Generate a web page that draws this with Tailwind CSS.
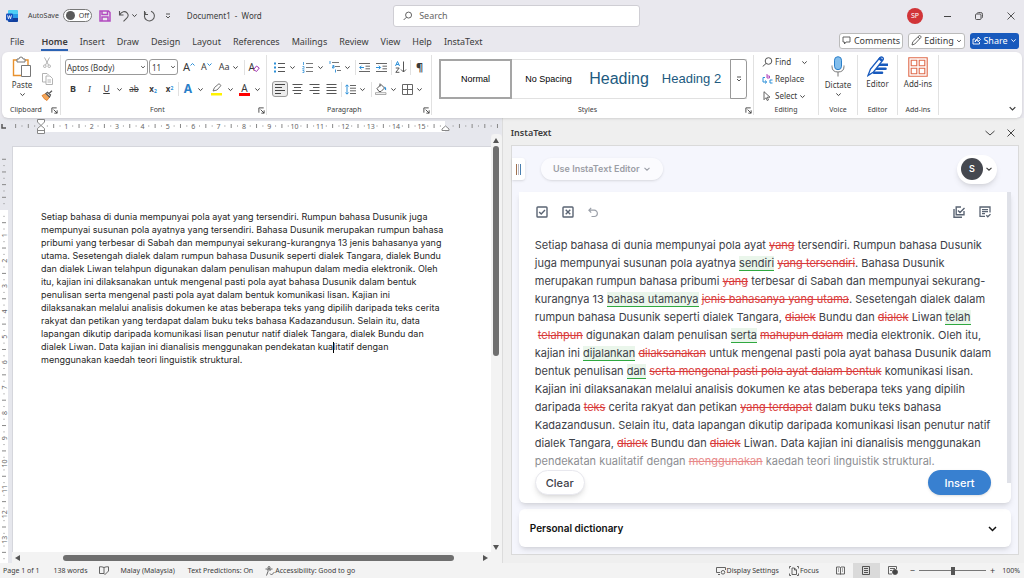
<!DOCTYPE html>
<html lang="en">
<head>
    <meta charset="UTF-8">
    <meta name="viewport" content="width=device-width, initial-scale=1.0">
    <title>Document1 - Word</title>
    <script src="https://cdn.jsdelivr.net/npm/@tailwindcss/browser@4"></script>
</head>
<body class="h-screen overflow-hidden flex flex-col bg-[#e9e8ee] text-[#3b3b3b] font-['Noto_Sans',sans-serif] text-[8px] leading-[10px]">

    <!-- Shared icon shapes -->
    <svg class="hidden">
        <symbol id="chev" viewBox="0 0 8 8"><path d="M1.5 2.8 4 5.2 6.5 2.8" fill="none" stroke="currentColor" stroke-width="1.1"/></symbol>
        <symbol id="launcher" viewBox="0 0 8 8"><path d="M1 6.5V1h5.5M3 3l4 4M7 3.8V7H3.8" fill="none" stroke="currentColor" stroke-width="1"/></symbol>
    </svg>

    <!-- Title bar -->
    <header class="h-[31px] shrink-0 flex items-center pl-[6px] pr-[8px]">
        <svg class="w-[12px] h-[12px]" viewBox="0 0 12 12"><rect x="2" width="10" height="12" rx="1.5" fill="#2b9be8"/><path d="M2 1.5Q2 0 3.5 0h7Q12 0 12 1.5V4H2z" fill="#4fd0f5"/><path d="M2 8h10v2.500q0 1.500-1.500 1.500h-7Q2 12 2 10.500z" fill="#123f9d"/><rect y="3.500" width="7" height="7" rx="1.200" fill="#1650bd"/><path d="m1.500 5.300 1 3.500 1-3.200 1 3.200 1-3.500" fill="none" stroke="#fff" stroke-width=".8"/></svg>
        <label class="flex items-center ml-[10px] gap-[4px] text-[7px]">AutoSave
            <input type="checkbox" class="peer sr-only">
            <span class="w-[29px] h-[13px] border border-[#777] rounded-full bg-white flex items-center gap-[4px] pl-[2px] text-[7px]"><i class="w-[9px] h-[9px] rounded-full bg-[#5a5a5a]"></i>Off</span>
        </label>
        <button class="ml-[7px]" aria-label="Save"><svg class="w-[12px] h-[12px]" viewBox="0 0 12 12" fill="none" stroke="#b24bc0" stroke-width="1.500"><path d="M1 1h8.500L11 2.500V11H1zM3 1v3.500h5.500V1M3 11V7h6v4"/></svg></button>
        <button class="ml-[7px]" aria-label="Undo"><svg class="w-[12px] h-[12px]" viewBox="0 0 12 12" fill="none" stroke="#555" stroke-width="1.100"><path d="M1.500 1v4h4M1.700 4.800C3.500 1.500 7 .8 9 2.800s1.200 4-.5 5.500L5.500 11.300"/></svg></button>
        <svg class="w-[7px] h-[7px] ml-px"><use href="#chev"/></svg>
        <button class="ml-[5px]" aria-label="Redo"><svg class="w-[13px] h-[12px]" viewBox="0 0 13 12" fill="none" stroke="#555" stroke-width="1.100"><path d="M1.500 1v3.500H5M8 1.200A5 5 0 1 1 3 2.300"/></svg></button>
        <svg class="w-[6px] h-[6px] ml-[9px]" viewBox="0 0 6 6" fill="none" stroke="#555"><path d="M1 1h4M1 3l2 2 2-2"/></svg>
        <h1 class="ml-[16px] w-[206px]">Document1&nbsp; -&nbsp; Word</h1>
        <label class="w-[247px] h-[22px] bg-white border border-[#cfced4] rounded-[3px] flex items-center pl-[9px] gap-[7px]">
            <svg class="w-[10px] h-[10px]" viewBox="0 0 10 10" fill="none" stroke="#555"><circle cx="6" cy="4" r="3.200"/><path d="M3.700 6.300.7 9.300"/></svg>
            <input type="text" aria-label="Search" placeholder="Search" class="w-full text-[9px] outline-none placeholder:text-[#666]">
        </label>
        <div class="ml-auto flex items-center">
            <span class="w-[16px] h-[16px] rounded-full bg-[#d13438] text-white text-[7px] flex items-center justify-center mr-[20px]">SP</span>
            <button class="mr-[24px]" aria-label="Minimize"><svg class="w-[8px] h-[8px]" viewBox="0 0 8 8" stroke="#444"><path d="M1 4.500h7"/></svg></button>
            <button class="mr-[24px]" aria-label="Restore"><svg class="w-[8px] h-[8px]" viewBox="0 0 8 8" fill="none" stroke="#444" stroke-width=".9"><rect x=".5" y="2" width="5.500" height="5.500" rx="1"/><path d="M2 1.500Q2.300.5 3.500.5h2.200Q7.500.5 7.500 2.300v2.500q0 1-.8 1.300"/></svg></button>
            <button class="mr-px" aria-label="Close"><svg class="w-[8px] h-[8px]" viewBox="0 0 8 8" stroke="#444" stroke-width=".9"><path d="m.5.5 7 7M7.500.5l-7 7"/></svg></button>
        </div>
    </header>

    <!-- Ribbon tabs -->
    <nav class="h-[21px] shrink-0 flex items-center pl-[10px] pr-[5px] text-[9px] leading-[12px]">
        <div class="flex gap-[12px] h-[18px] items-center">
            <a href="#" class="mr-[5px]">File</a>
            <a href="#" class="font-semibold h-[18px] pt-[3px] border-b-2 border-[#2b63b5]">Home</a>
            <a href="#">Insert</a>
            <a href="#">Draw</a>
            <a href="#">Design</a>
            <a href="#">Layout</a>
            <a href="#">References</a>
            <a href="#">Mailings</a>
            <a href="#">Review</a>
            <a href="#">View</a>
            <a href="#">Help</a>
            <a href="#">InstaText</a>
        </div>
        <div class="ml-auto flex gap-[5px] mb-[2px]">
            <button class="h-[16px] w-[64px] flex items-center justify-center gap-[3px] bg-white border border-[#bbb] rounded-[3px]"><svg class="w-[9px] h-[9px]" viewBox="0 0 9 9" fill="none" stroke="#555" stroke-width=".9"><path d="M1 1h7v5H4L2.500 8V6H1z"/></svg>Comments</button>
            <button class="h-[16px] w-[57px] flex items-center justify-center gap-[2px] bg-white border border-[#bbb] rounded-[3px]"><svg class="w-[11px] h-[11px]" viewBox="0 0 11 11" fill="none" stroke="#555" stroke-width=".9"><path d="m1 10 .8-3.200L8 .8q.8-.6 1.600.2t.2 1.600L3.800 9zM7 2l2 2"/></svg>Editing<svg class="w-[6px] h-[6px]"><use href="#chev"/></svg></button>
            <button class="h-[16px] w-[49px] flex items-center justify-center gap-[2px] bg-[#185abd] text-white rounded-[3px]"><svg class="w-[9px] h-[9px]" viewBox="0 0 9 9" fill="none" stroke="#fff" stroke-width=".9"><path d="M3 3H1v5h6.500V6M3 6Q3.200 3 6 3V1l2.500 2.500L6 5.800V4.200Q4 4 3 6z"/></svg>Share<svg class="w-[7px] h-[7px]"><use href="#chev"/></svg></button>
        </div>
    </nav>

    <!-- Ribbon -->
    <section class="h-[66px] shrink-0 mx-[2px] bg-white rounded-[6px] shadow-sm flex py-[3px] relative z-10">
        <!-- Clipboard -->
        <div class="w-[59px] flex flex-col border-r border-[#e1e1e1]">
            <div class="flex-1 flex justify-center gap-[6px]">
                <button class="flex flex-col items-center w-[26px]">
                    <svg class="w-[20px] h-[22px] mt-px" viewBox="0 0 20 22" fill="none"><path d="M5 4H1.500v15.500H9M13 4h3v5" stroke="#e8912d" stroke-width="1.400"/><path d="M5 3h2q0-2 2-2t2 2h2v3H5z" fill="#fff" stroke="#777"/><path d="M9.500 9.500h9v11h-9z" fill="#fff" stroke="#777"/></svg>
                    <span class="mt-[2px]">Paste</span>
                    <svg class="w-[7px] h-[7px] mt-px"><use href="#chev"/></svg>
                </button>
                <div class="flex flex-col items-center gap-[5px] pt-[2px]">
                    <button aria-label="Cut"><svg class="w-[8px] h-[11px] block" viewBox="0 0 8 11" fill="none" stroke="#aaa" stroke-width=".9"><path d="m1.500.5 4 7.500M6.500.5l-4 7.500"/><circle cx="1.800" cy="9.200" r="1.300"/><circle cx="6.200" cy="9.200" r="1.300"/></svg></button>
                    <button aria-label="Copy"><svg class="w-[11px] h-[12px] block" viewBox="0 0 11 12" fill="none" stroke="#aaa" stroke-width=".9"><path d="M4 9H.5V.5H5L6.500 2M4 3h4l2.500 2.500v6H4zM5.500 7H9M5.500 9H9"/></svg></button>
                    <button aria-label="Format Painter"><svg class="w-[12px] h-[11px] block" viewBox="0 0 12 11"><path d="M1 5.500 5 3.500 8.500 7 6 10.500q-3-1-5-5z" fill="#f3a65a" stroke="#e0761b" stroke-width=".8"/><path d="m5 3.500 1.500-1.200L9.500 5 8.500 7zM8 3.500 11 .8" stroke="#555" stroke-width="1.200" fill="#fff"/></svg></button>
                </div>
            </div>
            <div class="flex items-center justify-between pl-[8px] pr-[2px] text-[7px] leading-[10px]">Clipboard<svg class="w-[7px] h-[7px]"><use href="#launcher"/></svg></div>
        </div>
        <!-- Font -->
        <div class="w-[206px] flex flex-col border-r border-[#e1e1e1]">
            <div class="flex-1 flex flex-col pl-[4px] pt-[4px] gap-[6px]">
                <div class="flex items-center h-[16px]">
                    <div class="relative w-[83px] h-[16px]"><select aria-label="Font" class="appearance-none w-full h-full border border-[#999] rounded-[3px] pl-[1px] leading-[13px]"><option>Aptos (Body)</option></select><svg class="w-[6px] h-[6px] absolute right-[2px] top-[5px]"><use href="#chev"/></svg></div>
                    <div class="relative w-[29px] h-[16px] ml-[1px]"><select aria-label="Font size" class="appearance-none w-full h-full border border-[#999] rounded-[3px] pl-[2px] leading-[13px]"><option>11</option></select><svg class="w-[6px] h-[6px] absolute right-[2px] top-[5px]"><use href="#chev"/></svg></div>
                    <button class="ml-[5px] text-[11px] flex">A<sup class="top-0"><svg class="w-[5px] h-[5px]" viewBox="0 0 5 5" fill="none" stroke="#2b8fd8"><path d="m.5 3.500 2-2 2 2"/></svg></sup></button>
                    <button class="ml-[6px] text-[9px] flex">A<sup class="top-0"><svg class="w-[5px] h-[5px]" viewBox="0 0 5 5" fill="none" stroke="#2b8fd8"><path d="m.5 1.500 2 2 2-2"/></svg></sup></button>
                    <button class="ml-[7px] text-[9px] flex items-center gap-[2px]">Aa<svg class="w-[7px] h-[7px]"><use href="#chev"/></svg></button>
                    <i class="w-px h-[15px] bg-[#e1e1e1] ml-[5px]"></i>
                    <button class="ml-[4px] text-[10px] flex items-end">A<svg class="w-[7px] h-[7px] -ml-[2px]" viewBox="0 0 7 7"><path d="M.7 4.500 3.500 1l2.800 2-2.800 3.500z" fill="#fff" stroke="#a63bb5"/></svg></button>
                </div>
                <div class="flex items-center h-[16px] text-[9px]">
                    <button class="w-[16px] font-bold">B</button>
                    <button class="w-[17px] italic font-serif">I</button>
                    <button class="w-[17px] underline">U</button>
                    <svg class="w-[7px] h-[7px] ml-px"><use href="#chev"/></svg>
                    <button class="w-[22px] line-through text-[8px]">ab</button>
                    <button class="w-[16px] text-[8px] font-bold">x<sub class="text-[#2b8fd8] text-[5px]">2</sub></button>
                    <button class="w-[17px] text-[8px] font-bold">x<sup class="text-[#2b8fd8] text-[5px]">2</sup></button>
                    <i class="w-px h-[14px] bg-[#e1e1e1]"></i>
                    <button class="w-[18px] text-[12px] font-bold text-[#2b7fc9]">A</button>
                    <svg class="w-[7px] h-[7px]"><use href="#chev"/></svg>
                    <button class="ml-[7px]" aria-label="Highlight"><svg class="w-[11px] h-[13px] block" viewBox="0 0 11 13"><path d="M0 10h11v2.500H0z" fill="#fff200"/><path d="m2 8 1.500-3.500L8 .7l2 1.800-4 4.500L2 8z" fill="#fff" stroke="#666" stroke-width=".9"/></svg></button>
                    <svg class="w-[7px] h-[7px] ml-[5px]"><use href="#chev"/></svg>
                    <button class="ml-[5px]" aria-label="Font colour"><span class="block w-[11px] h-[13px] border-b-[3px] border-[#f00] text-[10px]">A</span></button>
                    <svg class="w-[7px] h-[7px] ml-[4px]"><use href="#chev"/></svg>
                </div>
            </div>
            <div class="flex items-center justify-between pl-[89px] pr-[1px] text-[7px] leading-[10px]">Font<svg class="w-[7px] h-[7px]"><use href="#launcher"/></svg></div>
        </div>
        <!-- Paragraph -->
        <div class="w-[165px] flex flex-col border-r border-[#e1e1e1]">
            <div class="flex-1 flex flex-col pl-[5px] pt-[4px] gap-[6px]">
                <div class="flex items-center h-[16px]">
                    <button class="ml-[2px]" aria-label="Bullets"><svg class="w-[11px] h-[11px] block" viewBox="0 0 11 11"><path d="M4 1.500h7M4 5.500h7M4 9.500h7" stroke="#555"/><path d="M0 1.500h2M0 5.500h2M0 9.500h2" stroke="#2b8fd8" stroke-width="2"/></svg></button>
                    <svg class="w-[7px] h-[7px] ml-[4px]"><use href="#chev"/></svg>
                    <button class="ml-[6px]" aria-label="Numbering"><svg class="w-[11px] h-[11px] block" viewBox="0 0 11 11"><path d="M4 1.500h7M4 5.500h7M4 9.500h7" stroke="#777"/><path d="M1.500 0v3M.5 4.500h1.500v1L.5 7h2M.5 8.500h1.500v2H.5" fill="none" stroke="#2b8fd8" stroke-width=".8"/></svg></button>
                    <svg class="w-[7px] h-[7px] ml-[4px]"><use href="#chev"/></svg>
                    <button class="ml-[5px]" aria-label="Multilevel list"><svg class="w-[12px] h-[12px] block" viewBox="0 0 12 12"><path d="M3 1.500h7M6 5.500h5M8 9.500h4" stroke="#777"/><path d="M1 0v3M3.500 4.500H5v2.500H3.500V5.700H5M6.500 8.500v3" fill="none" stroke="#2b8fd8" stroke-width=".9"/></svg></button>
                    <svg class="w-[7px] h-[7px] ml-[3px]"><use href="#chev"/></svg>
                    <i class="w-px h-[15px] bg-[#e1e1e1] ml-[4px]"></i>
                    <button class="ml-[3px]" aria-label="Decrease indent"><svg class="w-[11px] h-[11px] block" viewBox="0 0 11 11" fill="none"><path d="M0 1.500h11M6.500 4.200H11M6.500 6.800H11M0 9.500h11" stroke="#666"/><path d="M5 5.500H.8M2.500 3.700.7 5.500l1.800 1.800" stroke="#2b8fd8"/></svg></button>
                    <button class="ml-[6px]" aria-label="Increase indent"><svg class="w-[11px] h-[11px] block" viewBox="0 0 11 11" fill="none"><path d="M0 1.500h11M6.500 4.200H11M6.500 6.800H11M0 9.500h11" stroke="#666"/><path d="M0 5.500h4.500M2.800 3.700l1.800 1.800-1.800 1.800" stroke="#2b8fd8"/></svg></button>
                    <i class="w-px h-[15px] bg-[#e1e1e1] ml-[4px]"></i>
                    <button class="ml-[3px]" aria-label="Sort"><svg class="w-[12px] h-[12px] block" viewBox="0 0 12 12" fill="none"><path d="M.5 5 2.500.5 4.500 5M1.200 3.500h2.600" stroke="#2b8fd8"/><path d="M.8 7h3.400L.8 11.300h3.600M8.500.5V11M6 8.500 8.500 11 11 8.500" stroke="#555"/></svg></button>
                    <i class="w-px h-[15px] bg-[#e1e1e1] ml-[3px]"></i>
                    <button class="ml-[5px] text-[11px] font-bold">¶</button>
                </div>
                <div class="flex items-center h-[16px]">
                    <button class="w-[16px] h-[16px] rounded-[3px] border border-[#999] bg-[#ececec] flex items-center justify-center" aria-label="Align left"><svg class="w-[11px] h-[10px]" viewBox="0 0 11 10" stroke="#444"><path d="M0 .5h10M0 3.500h7M0 6.500h10M0 9.500h6"/></svg></button>
                    <button class="ml-[4px]" aria-label="Center"><svg class="w-[11px] h-[10px] block" viewBox="0 0 11 10" stroke="#555"><path d="M.5.500h10M2 3.500h7M.5 6.500h10M2 9.500h7"/></svg></button>
                    <button class="ml-[6px]" aria-label="Align right"><svg class="w-[11px] h-[10px] block" viewBox="0 0 11 10" stroke="#555"><path d="M.5.500h10M4 3.500h6.500M.5 6.500h10M4 9.500h6.500"/></svg></button>
                    <button class="ml-[6px]" aria-label="Justify"><svg class="w-[11px] h-[10px] block" viewBox="0 0 11 10" stroke="#555"><path d="M.5.500h10M.5 3.500h10M.5 6.500h10M.5 9.500h10"/></svg></button>
                    <i class="w-px h-[15px] bg-[#e1e1e1] ml-[4px]"></i>
                    <button class="ml-[3px]" aria-label="Line spacing"><svg class="w-[11px] h-[11px] block" viewBox="0 0 11 11" fill="none"><path d="M5 1.500h6M5 4.200h6M5 6.800h6M5 9.500h6" stroke="#666"/><path d="M2 1v9M.4 2.500 2 .8l1.600 1.700M.4 8.500 2 10.200l1.600-1.700" stroke="#2b8fd8"/></svg></button>
                    <svg class="w-[7px] h-[7px] ml-[3px]"><use href="#chev"/></svg>
                    <i class="w-px h-[15px] bg-[#e1e1e1] ml-[5px]"></i>
                    <button class="ml-[3px]" aria-label="Shading"><svg class="w-[12px] h-[12px] block" viewBox="0 0 12 12" fill="none"><path d="m2 5.500 4-4L9.500 5 6 8.500H4zM5 .500v3" stroke="#555"/><path d="M9.500 4q1.500 1 1 3" stroke="#2b8fd8" stroke-width="1.300"/><path d="M.5 9.700h10.500v1.800H.5z" fill="#fff" stroke="#888" stroke-width=".7"/></svg></button>
                    <svg class="w-[7px] h-[7px] ml-[3px]"><use href="#chev"/></svg>
                    <button class="ml-[5px]" aria-label="Borders"><svg class="w-[11px] h-[11px] block" viewBox="0 0 11 11" fill="none" stroke="#666"><path d="M.5.500h10v10H.5zM5.500.500v10M.5 5.500h10"/></svg></button>
                    <svg class="w-[7px] h-[7px] ml-[3px]"><use href="#chev"/></svg>
                </div>
            </div>
            <div class="flex items-center justify-between pl-[60px] pr-[1px] text-[7px] leading-[10px]">Paragraph<svg class="w-[7px] h-[7px]"><use href="#launcher"/></svg></div>
        </div>
        <!-- Styles -->
        <div class="w-[322px] flex flex-col border-r border-[#e1e1e1]">
            <div class="flex-1 pl-[7px] pt-[4px]">
                <div class="w-[308px] h-[40px] flex items-stretch border-y border-[#e1e1e1] font-['Liberation_Sans',sans-serif] text-[9px]">
                    <button class="w-[73px] -my-px border-2 border-[#a5a5a5] text-black">Normal</button>
                    <button class="w-[73px] text-black">No Spacing</button>
                    <button class="w-[68px] overflow-hidden whitespace-nowrap text-[16px] leading-[20px] text-[#215a80]">Heading</button>
                    <button class="flex-1 text-[13px] leading-[16px] text-[#215a80]">Heading 2</button>
                    <button class="w-[17px] -my-px border border-[#999] rounded-r-[3px] flex items-center justify-center" aria-label="More styles"><svg class="w-[6px] h-[6px]" viewBox="0 0 6 6" fill="none" stroke="#555"><path d="M1 1h4M1 3l2 2 2-2"/></svg></button>
                </div>
            </div>
            <div class="flex items-center justify-between pl-[146px] pr-[1px] text-[7px] leading-[10px]">Styles<svg class="w-[7px] h-[7px]"><use href="#launcher"/></svg></div>
        </div>
        <!-- Editing -->
        <div class="w-[65px] flex flex-col border-r border-[#e1e1e1]">
            <div class="flex-1 flex flex-col items-start gap-[7px] pl-[8px] pt-[2px]">
                <button class="flex items-center gap-[2px]"><svg class="w-[11px] h-[10px]" viewBox="0 0 11 10" fill="none" stroke="#555"><circle cx="6.500" cy="4" r="3.300"/><path d="M4 6.500.7 9.500"/></svg>Find<svg class="w-[7px] h-[7px] ml-[8px]"><use href="#chev"/></svg></button>
                <button class="flex items-center gap-[2px]"><svg class="w-[11px] h-[10px]" viewBox="0 0 11 10" fill="none"><path d="M5 0v4h2.500V2H5" stroke="#b24bc0"/><path d="M3 3.500H1V8h3.500M3 6.500 4.700 8 3 9.500M10.500 6H8v3h2.500" stroke="#2b8fd8"/></svg>Replace</button>
                <button class="flex items-center gap-[2px]"><svg class="w-[11px] h-[10px]" viewBox="0 0 11 10" fill="none" stroke="#555" stroke-width=".9"><path d="M2 .700v8l2-2 1.200 2.800 1.300-.6L5.300 6.200H8z"/></svg>Select<svg class="w-[7px] h-[7px]"><use href="#chev"/></svg></button>
            </div>
            <div class="text-center text-[7px] leading-[10px]">Editing</div>
        </div>
        <!-- Voice -->
        <div class="w-[39px] flex flex-col border-r border-[#e1e1e1]">
            <button class="flex-1 flex flex-col items-center">
                <svg class="w-[14px] h-[21px] mt-px" viewBox="0 0 14 21" fill="none"><rect x="3.500" y=".7" width="7" height="13" rx="3.500" fill="#83beec" stroke="#2b7fc9"/><path d="M1 9.500v1Q1 16 7 16t6-5.500v-1M7 16v4.500" stroke="#777"/></svg>
                <span class="mt-[3px]">Dictate</span>
                <svg class="w-[7px] h-[7px] mt-px"><use href="#chev"/></svg>
            </button>
            <div class="text-center text-[7px] leading-[10px]">Voice</div>
        </div>
        <!-- Editor -->
        <div class="w-[40px] flex flex-col border-r border-[#e1e1e1]">
            <button class="flex-1 flex flex-col items-center">
                <svg class="w-[21px] h-[21px] mt-px" viewBox="0 0 21 21" fill="none"><path d="M11 8.700h9.500M9.500 12.700h9M7 16.700h8" stroke="#185abd" stroke-width="2.600" stroke-linecap="round"/><path d="M1 19.500 3.500 13 13 1.500q1.500-1 2.700 0t.3 2.500L6.500 16z" fill="#fff" stroke="#185abd" stroke-width="1.300"/><path d="m12 2 3.500 3" stroke="#185abd" stroke-width="2.500"/></svg>
                <span class="mt-[2px]">Editor</span>
            </button>
            <div class="text-center text-[7px] leading-[10px]">Editor</div>
        </div>
        <!-- Add-ins -->
        <div class="w-[41px] flex flex-col border-r border-[#e1e1e1]">
            <button class="flex-1 flex flex-col items-center">
                <svg class="w-[20px] h-[20px] mt-[2px]" viewBox="0 0 20 20" fill="none" stroke="#e0694a" stroke-width="1.100"><path d="M.8.8h18.400v18.400H.8zM3.200 3.200h5.600v5.600H3.200zM11.200 3.200h5.600v5.600h-5.600zM3.200 11.200h5.600v5.600H3.200zM11.200 11.200h5.600v5.600h-5.600z"/></svg>
                <span class="mt-[2px]">Add-ins</span>
            </button>
            <div class="text-center text-[7px] leading-[10px]">Add-ins</div>
        </div>
        <button class="ml-auto self-end mr-[5px] mb-[2px]" aria-label="Collapse ribbon"><svg class="w-[9px] h-[9px] block"><use href="#chev"/></svg></button>
    </section>

    <div class="flex-1 min-h-0 flex">
        <!-- Document side -->
        <div class="w-[49%] shrink-0 flex flex-col">
            <svg id="hruler" class="w-full h-[16px] shrink-0 block" aria-hidden="true"></svg>
            <div class="flex-1 min-h-0 flex">
                <svg id="vruler" class="w-[12px] h-full shrink-0 block" aria-hidden="true"></svg>
                <div class="flex-1 min-w-0 flex flex-col pt-[12px] bg-[#e6e7ed]">
                    <article contenteditable="true" class="flex-1 min-h-0 bg-white border-t border-l border-[#d5d6dc] pl-[28px] pt-[63px] outline-none whitespace-nowrap text-[#1f1f1f] font-['Inter',sans-serif] text-[9px] leading-[13px]">
                        Setiap bahasa di dunia mempunyai pola ayat yang tersendiri. Rumpun bahasa Dusunik juga<br>
                        mempunyai susunan pola ayatnya yang tersendiri. Bahasa Dusunik merupakan rumpun bahasa<br>
                        pribumi yang terbesar di Sabah dan mempunyai sekurang-kurangnya 13 jenis bahasanya yang<br>
                        utama. Sesetengah dialek dalam rumpun bahasa Dusunik seperti dialek Tangara, dialek Bundu<br>
                        dan dialek Liwan telahpun digunakan dalam penulisan mahupun dalam media elektronik. Oleh<br>
                        itu, kajian ini dilaksanakan untuk mengenal pasti pola ayat bahasa Dusunik dalam bentuk<br>
                        penulisan serta mengenal pasti pola ayat dalam bentuk komunikasi lisan. Kajian ini<br>
                        dilaksanakan melalui analisis dokumen ke atas beberapa teks yang dipilih daripada teks cerita<br>
                        rakyat dan petikan yang terdapat dalam buku teks bahasa Kadazandusun. Selain itu, data<br>
                        lapangan dikutip daripada komunikasi lisan penutur natif dialek Tangara, dialek Bundu dan<br>
                        dialek Liwan. Data kajian ini dianalisis menggunakan pendekatan kua<span class="inline-block w-px h-[11px] -mr-px bg-black align-middle"></span>litatif dengan<br>
                        menggunakan kaedah teori linguistik struktural.
                    </article>
                    <div class="h-[11px] shrink-0 bg-[#f3f3f3] flex items-center gap-[43px] pl-[3px] pr-[3px]">
                        <svg class="w-[5px] h-[6px]" viewBox="0 0 5 6"><path d="M5 0v6L0 3z" fill="#555"/></svg>
                        <i class="flex-1 h-[6px] rounded-full bg-[#6f6f6f] -mr-[14px]"></i>
                        <svg class="w-[5px] h-[6px]" viewBox="0 0 5 6"><path d="M0 0v6l5-3z" fill="#555"/></svg>
                    </div>
                </div>
                <div class="w-[11px] bg-[#f3f3f3] rounded-t-[4px] flex flex-col items-center pt-[4px] pb-[13px]">
                    <svg class="w-[6px] h-[5px]" viewBox="0 0 6 5"><path d="M0 5h6L3 0z" fill="#555"/></svg>
                    <i class="w-[6px] h-[51%] mt-[3px] rounded-full bg-[#6f6f6f]"></i>
                    <svg class="w-[6px] h-[5px] mt-auto" viewBox="0 0 6 5"><path d="M0 0h6L3 5z" fill="#555"/></svg>
                </div>
            </div>
        </div>

        <!-- InstaText add-in pane -->
        <aside class="flex-1 min-w-0 bg-[#efefef] border-l border-[#dcdcdc] flex flex-col pl-[8px] pr-[5px] pb-[8px]">
            <div class="h-[27px] shrink-0 flex items-center pt-[2px] pr-[4px]">
                <h2 class="text-[9px] font-semibold">InstaText</h2>
                <button class="ml-auto mr-[12px]" aria-label="Pane options"><svg class="w-[10px] h-[10px] block" viewBox="0 0 10 10" fill="none" stroke="#444"><path d="m.5 3 4.500 4 4.500-4"/></svg></button>
                <button aria-label="Close pane"><svg class="w-[8px] h-[8px] block" viewBox="0 0 8 8" stroke="#444"><path d="m.5.500 7 7M7.500.500l-7 7"/></svg></button>
            </div>
            <div class="flex-1 min-h-0 border border-[#dadada] bg-[#f5f6fd] flex flex-col font-['Inter',sans-serif]">
                <div class="h-[46px] shrink-0 flex items-center pr-[21px]">
                    <span class="w-[13px] h-[22px] bg-white rounded-r-[3px] shadow-sm flex items-center justify-center gap-px"><i class="w-px h-[11px] bg-[#a0714f]"></i><i class="w-px h-[11px] bg-[#b9b9c4]"></i><i class="w-px h-[11px] bg-[#4a7fb0]"></i></span>
                    <button class="ml-[16px] w-[122px] h-[22px] rounded-full bg-white/60 shadow-sm flex items-center justify-center gap-[3px] text-[9px] font-semibold text-[#9b9ea6]">Use InstaText Editor<svg class="w-[8px] h-[8px]"><use href="#chev"/></svg></button>
                    <button class="ml-auto w-[40px] h-[29px] rounded-full bg-white shadow-md flex items-center gap-[2px] pl-[4px]"><span class="w-[22px] h-[22px] rounded-full bg-[#45484f] text-white text-[9px] font-semibold flex items-center justify-center">S</span><svg class="w-[8px] h-[8px]"><use href="#chev"/></svg></button>
                </div>
                <div class="flex-1 min-h-0 mx-[7px] rounded-b-[6px] bg-white shadow-md flex relative">
                    <div class="flex-1 min-w-0 px-[16px] pt-[14px] flex flex-col">
                        <div class="flex items-center h-[12px] shrink-0 text-[#5a6473]">
                            <button class="ml-[1px]" aria-label="Accept all"><svg class="w-[12px] h-[12px] block" viewBox="0 0 12 12" fill="none" stroke="currentColor" stroke-width="1.400"><rect x="1" y="1" width="10" height="10" rx=".8"/><path d="m3.200 6 2 2L9 4"/></svg></button>
                            <button class="ml-[14px]" aria-label="Reject all"><svg class="w-[12px] h-[12px] block" viewBox="0 0 12 12" fill="none" stroke="currentColor" stroke-width="1.400"><rect x="1" y="1" width="10" height="10" rx=".8"/><path d="m3.700 3.700 4.600 4.600M8.300 3.700 3.700 8.300"/></svg></button>
                            <button class="ml-[14px] text-[#9a9fa8]" aria-label="Undo"><svg class="w-[10px] h-[11px] block" viewBox="0 0 10 11" fill="none" stroke="currentColor" stroke-width="1.200"><path d="M3.200.800.9 3.200l2.300 2.400M1 3.200h5.200a3 3 0 0 1 0 6.300H3.500"/></svg></button>
                            <button class="ml-auto" aria-label="Copy checked"><svg class="w-[12px] h-[12px] block" viewBox="0 0 12 12" fill="none" stroke="currentColor" stroke-width="1.400"><path d="M1 3v8.200h8M11 5v3.800H3.200V1H8M5 4.500l2 2L11.500 2"/></svg></button>
                            <button class="ml-[14px]" aria-label="Review text"><svg class="w-[12px] h-[12px] block" viewBox="0 0 12 12" fill="none" stroke="currentColor" stroke-width="1.300"><path d="M6 10.300H1V1h10v5.500M3 3.700h6M3 5.700h6M3 7.700h3M7.300 9.300l1.500 1.500 2.700-2.700"/></svg></button>
                        </div>
                        <!-- del = removed words, ins = suggested words -->
                        <div class="mt-[18px] whitespace-nowrap text-[11px] leading-[18px] text-[#3d4148] [&_del]:text-[#d93b3b] [&_ins]:no-underline [&_ins]:border-b [&_ins]:border-[#2fa83f] [&_ins]:bg-[#eaf6eb]">
                            Setiap bahasa di dunia mempunyai pola ayat <del>yang</del> tersendiri. Rumpun bahasa Dusunik<br>
                            juga mempunyai susunan pola ayatnya <ins>sendiri</ins> <del>yang tersendiri</del>. Bahasa Dusunik<br>
                            merupakan rumpun bahasa pribumi <del>yang</del> terbesar di Sabah dan mempunyai sekurang-<br>
                            kurangnya 13 <ins>bahasa utamanya</ins> <del>jenis bahasanya yang utama</del>. Sesetengah dialek dalam<br>
                            rumpun bahasa Dusunik seperti dialek Tangara, <del>dialek</del> Bundu dan <del>dialek</del> Liwan <ins>telah</ins><br>
                            &nbsp;<del>telahpun</del> digunakan dalam penulisan <ins>serta</ins> <del>mahupun dalam</del> media elektronik. Oleh itu,<br>
                            kajian ini <ins>dijalankan</ins> <del>dilaksanakan</del> untuk mengenal pasti pola ayat bahasa Dusunik dalam<br>
                            bentuk penulisan <ins>dan</ins> <del>serta mengenal pasti pola ayat dalam bentuk</del> komunikasi lisan.<br>
                            Kajian ini dilaksanakan melalui analisis dokumen ke atas beberapa teks yang dipilih<br>
                            daripada <del>teks</del> cerita rakyat dan petikan <del>yang terdapat</del> dalam buku teks bahasa<br>
                            Kadazandusun. Selain itu, data lapangan dikutip daripada komunikasi lisan penutur natif<br>
                            dialek Tangara, <del>dialek</del> Bundu dan <del>dialek</del> Liwan. Data kajian ini dianalisis menggunakan<br>
                            <span class="opacity-60">pendekatan kualitatif dengan <del>menggunakan</del> kaedah teori linguistik struktural.</span>
                        </div>
                    </div>
                    <i class="w-[4px] mb-[20px] bg-[#dfe1e8] shrink-0"></i>
                    <div class="absolute inset-x-0 bottom-0 pl-[16px] pb-[8px] pr-[20px] flex justify-between text-[11px] font-medium">
                        <button class="w-[50px] h-[25px] rounded-full bg-white border border-[#e8e8ee] shadow-md text-[#3d4148]">Clear</button>
                        <button class="w-[63px] h-[25px] rounded-full bg-[#3880d0] shadow-sm text-white">Insert</button>
                    </div>
                </div>
                <button class="h-[38px] shrink-0 mt-[6px] mb-[7px] mx-[7px] px-[11px] rounded-[6px] bg-white shadow-md flex items-center justify-between text-[10px] font-semibold text-[#111]">Personal dictionary<svg class="w-[9px] h-[9px] mr-[3px]" viewBox="0 0 9 9" fill="none" stroke="#111" stroke-width="1.500"><path d="m1 3 3.500 3.500L8 3"/></svg></button>
            </div>
        </aside>
    </div>

    <!-- Status bar -->
    <footer class="h-[15px] shrink-0 bg-[#f3f3f3] flex items-center pl-[3px] pr-[4px] text-[7px]">
        <span>Page 1 of 1</span>
        <span class="ml-[14px]">138 words</span>
        <svg class="w-[10px] h-[9px] ml-[11px]" viewBox="0 0 10 9" fill="none" stroke="#555" stroke-width=".9"><path d="M5 1.500v6M5 1.500Q3 .500.500.800V7.500H5L6 8.500 9.500 5V.800Q7 .500 5 1.500"/></svg>
        <span class="ml-[12px]">Malay (Malaysia)</span>
        <span class="ml-[13px]">Text Predictions: On</span>
        <svg class="w-[10px] h-[10px] ml-[12px]" viewBox="0 0 10 10" fill="none" stroke="#555" stroke-width=".9"><circle cx="4" cy="1.500" r="1"/><path d="M.5 3h7M3 3v2.500L1.500 9.500M5 3v2M5 7.500l1.500 1.500 3-3"/></svg>
        <span>Accessibility: Good to go</span>
        <div class="ml-auto flex items-center h-full">
            <button class="flex items-center gap-px"><svg class="w-[10px] h-[9px]" viewBox="0 0 10 9" fill="none" stroke="#555" stroke-width=".9"><path d="M4 6.500H.5v-5h9V4M2 8.500h2"/><circle cx="7" cy="6.300" r="1.800"/></svg>Display Settings</button>
            <button class="flex items-center gap-px ml-[10px]"><svg class="w-[10px] h-[10px]" viewBox="0 0 10 10" fill="none" stroke="#555" stroke-width=".9"><path d="M.5 2.500v-2h1.500M8 .500h1.500v2M.5 7.500v2h1.500M8 9.500h1.500v-2M3 2h2.500L7.500 4v4.500H3zM5.500 2v2h2"/></svg>Focus</button>
            <button class="ml-[17px]" aria-label="Read mode"><svg class="w-[9px] h-[9px] block" viewBox="0 0 9 9" fill="none" stroke="#555" stroke-width=".9"><path d="M.5 1h3.500l.5.500.5-.500h3.500v7H.5zM4.500 1.500v7M2 3h1M2 5h1M6 3h1M6 5h1"/></svg></button>
            <button class="ml-[8px] w-[27px] h-full bg-[#dadada] flex items-center justify-center" aria-label="Print layout"><svg class="w-[8px] h-[9px]" viewBox="0 0 8 9" fill="none" stroke="#444" stroke-width=".9"><path d="M.5.500h7v8h-7zM2 2.500h4M2 4.500h4M2 6.500h4"/></svg></button>
            <button class="ml-[8px]" aria-label="Web layout"><svg class="w-[10px] h-[9px] block" viewBox="0 0 10 9" fill="none" stroke="#555" stroke-width=".9"><path d="M4 8H.5V.500h8V3M2 2.500h5M2 4.500h2"/><circle cx="7" cy="6" r="2.500" fill="#444"/></svg></button>
            <button class="ml-[12px] text-[9px]">−</button>
            <input type="range" min="10" max="190" value="100" aria-label="Zoom" class="mx-[4px] w-[67px] h-px appearance-none bg-[#777] [&::-webkit-slider-thumb]:appearance-none [&::-webkit-slider-thumb]:w-[4px] [&::-webkit-slider-thumb]:h-[8px] [&::-webkit-slider-thumb]:bg-[#555]">
            <button class="text-[9px]">+</button>
            <span class="ml-[7px]">100%</span>
        </div>
    </footer>

    <script>
        // Draws both rulers: a number every centimetre, a tick at the half, a dot at the quarters
        const CM = 25.36;

        function marks(origin, from, to, vertical) {
            let out = '';
            for (let q = from; q <= to; q++) {
                if (q === 0) continue;
                const p = origin + q * CM / 4;
                const at = vertical ? `translate(4 ${p}) rotate(-90)` : `translate(${p} 8)`;
                if (q > 0 && q < 64 && q % 4 === 0) {
                    out += `<text transform="${at}" y="2.500" text-anchor="middle" font-size="7" fill="#666">${q / 4}</text>`;
                } else if (q % 2 === 0) {
                    out += `<path transform="${at}" d="M0-2V2" stroke="#888"/>`;
                } else {
                    out += `<path transform="${at}" d="M-.5 0h1" stroke="#888"/>`;
                }
            }
            return out;
        }

        document.getElementById('hruler').innerHTML =
            '<rect width="100%" height="16" fill="#e6e7ed"/><rect x="41" y="3" width="404" height="11" fill="#fff"/>' +
            marks(41, -4, 63, false) + marks(41, 65, 72, false) +
            '<path d="M2 6v4h4" fill="none" stroke="#555" stroke-width="1.500"/>' +
            '<path d="M37.500 1.500h7v2.500L41 7.500 37.500 4zM37.500 15.500v-5L41 7.500l3.500 3v5zM37.500 12.500h7M442 12.500v-1.500l3.500-3 3.500 3v1.500z" fill="#fff" stroke="#888"/>';

        document.getElementById('vruler').innerHTML =
            '<rect width="12" height="100%" fill="#e6e7ed"/><rect y="76" width="8" height="100%" fill="#fff"/>' +
            marks(76, -8, 55, true);
    </script>
</body>
</html>
